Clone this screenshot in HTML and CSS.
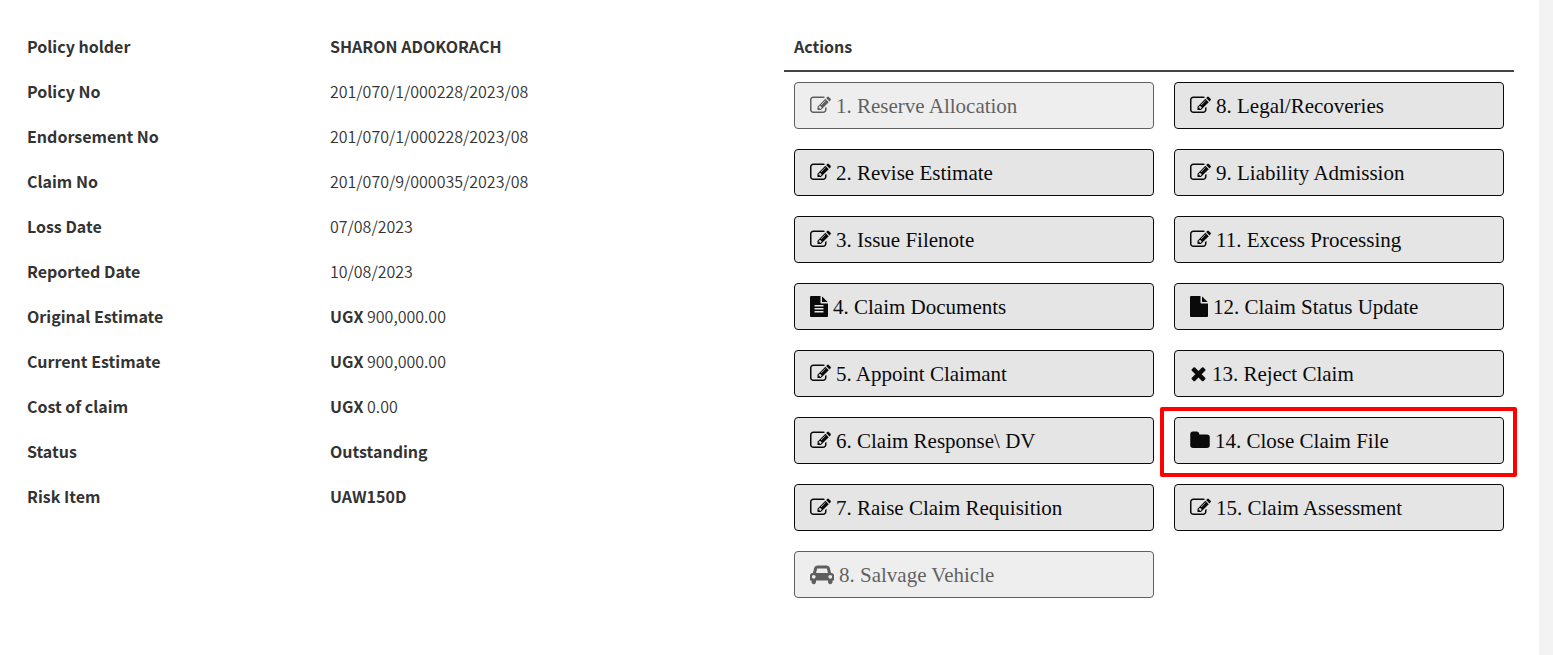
FILE: index.html
```html
<!DOCTYPE html>
<html lang="en">
<head>
    <meta charset="UTF-8">
    <meta name="viewport" content="width=device-width, initial-scale=1.0">
    <title>Claim Details</title>
    <link rel="stylesheet" href="styles.css">
</head>
<body>

    <!-- Icons -->
    <svg class="sprite" aria-hidden="true">
        <symbol id="edit" viewBox="0 0 1792 1792"><path d="M888 1184l116-116-152-152-116 116v56h96v96h56zm440-720q-16-16-33 1l-350 350q-17 17-1 33t33-1l350-350q17-17 1-33zm80 594v190q0 119-84.5 203.5t-203.5 84.5h-832q-119 0-203.5-84.5t-84.5-203.5v-832q0-119 84.5-203.5t203.5-84.5h832q63 0 117 25 15 7 18 23 3 17-9 29l-49 49q-14 14-32 8-23-6-45-6h-832q-66 0-113 47t-47 113v832q0 66 47 113t113 47h832q66 0 113-47t47-113v-126q0-13 9-22l64-64q15-15 35-7t20 29zm-96-738l288 288-672 672h-288v-288zm444 132l-92 92-288-288 92-92q28-28 68-28t68 28l152 152q28 28 28 68t-28 68z"/></symbol>
        <symbol id="file" viewBox="128 0 1536 1792"><path d="M1152 512v-472q22 14 36 28l408 408q14 14 28 36h-472zm-128 32q0 40 28 68t68 28h544v1056q0 40-28 68t-68 28h-1344q-40 0-68-28t-28-68v-1600q0-40 28-68t68-28h800v544z"/></symbol>
        <symbol id="file-text" viewBox="128 0 1536 1792"><path d="M1596 476q14 14 28 36h-472v-472q22 14 36 28zm-476 164h544v1056q0 40-28 68t-68 28h-1344q-40 0-68-28t-28-68v-1600q0-40 28-68t68-28h800v544q0 40 28 68t68 28zm160 736v-64q0-14-9-23t-23-9h-704q-14 0-23 9t-9 23v64q0 14 9 23t23 9h704q14 0 23-9t9-23zm0-256v-64q0-14-9-23t-23-9h-704q-14 0-23 9t-9 23v64q0 14 9 23t23 9h704q14 0 23-9t9-23zm0-256v-64q0-14-9-23t-23-9h-704q-14 0-23 9t-9 23v64q0 14 9 23t23 9h704q14 0 23-9t9-23z"/></symbol>
        <symbol id="times" viewBox="192 0 1408 1792"><path d="M1490 1322q0 40-28 68l-136 136q-28 28-68 28t-68-28l-294-294-294 294q-28 28-68 28t-68-28l-136-136q-28-28-28-68t28-68l294-294-294-294q-28-28-28-68t28-68l136-136q28-28 68-28t68 28l294 294 294-294q28-28 68-28t68 28l136 136q28 28 28 68t-28 68l-294 294 294 294q28 28 28 68z"/></symbol>
        <symbol id="folder" viewBox="64 0 1664 1792"><path d="M1728 608v704q0 92-66 158t-158 66h-1216q-92 0-158-66t-66-158v-960q0-92 66-158t158-66h320q92 0 158 66t66 158v32h672q92 0 158 66t66 158z"/></symbol>
        <symbol id="car" viewBox="0 0 2048 1792"><path d="M480 1088q0-66-47-113t-113-47-113 47-47 113 47 113 113 47 113-47 47-113zm36-320h1016l-89-357q-2-8-14-17.5t-21-9.5h-768q-9 0-21 9.5t-14 17.5zm1372 320q0-66-47-113t-113-47-113 47-47 113 47 113 113 47 113-47 47-113zm160-96v384q0 14-9 23t-23 9h-96v128q0 80-56 136t-136 56-136-56-56-136v-128h-1024v128q0 80-56 136t-136 56-136-56-56-136v-128h-96q-14 0-23-9t-9-23v-384q0-93 65.5-158.5t158.5-65.5h28l105-419q23-94 104-157.5t179-63.5h768q98 0 179 63.5t104 157.5l105 419h28q93 0 158.5 65.5t65.5 158.5z"/></symbol>
    </svg>

    <main class="page">
        <table class="details">
            <tr><th scope="row">Policy holder</th><td><b>SHARON ADOKORACH</b></td></tr>
            <tr><th scope="row">Policy No</th><td>201/070/1/000228/2023/08</td></tr>
            <tr><th scope="row">Endorsement No</th><td>201/070/1/000228/2023/08</td></tr>
            <tr><th scope="row">Claim No</th><td>201/070/9/000035/2023/08</td></tr>
            <tr><th scope="row">Loss Date</th><td>07/08/2023</td></tr>
            <tr><th scope="row">Reported Date</th><td>10/08/2023</td></tr>
            <tr><th scope="row">Original Estimate</th><td><b>UGX</b> 900,000.00</td></tr>
            <tr><th scope="row">Current Estimate</th><td><b>UGX</b> 900,000.00</td></tr>
            <tr><th scope="row">Cost of claim</th><td><b>UGX</b> 0.00</td></tr>
            <tr><th scope="row">Status</th><td><b>Outstanding</b></td></tr>
            <tr><th scope="row">Risk Item</th><td><b>UAW150D</b></td></tr>
        </table>

        <section class="actions">
            <h2 class="actions-title">Actions</h2>
            <div class="actions-grid">
                <div class="actions-col">
                    <button type="button" class="btn" disabled><svg class="icon"><use href="#edit"/></svg>1. Reserve Allocation</button>
                    <button type="button" class="btn"><svg class="icon"><use href="#edit"/></svg>2. Revise Estimate</button>
                    <button type="button" class="btn"><svg class="icon"><use href="#edit"/></svg>3. Issue Filenote</button>
                    <button type="button" class="btn"><svg class="icon icon-file"><use href="#file-text"/></svg>4. Claim Documents</button>
                    <button type="button" class="btn"><svg class="icon"><use href="#edit"/></svg>5. Appoint Claimant</button>
                    <button type="button" class="btn"><svg class="icon"><use href="#edit"/></svg>6. Claim Response\ DV</button>
                    <button type="button" class="btn"><svg class="icon"><use href="#edit"/></svg>7. Raise Claim Requisition</button>
                    <button type="button" class="btn" disabled><svg class="icon icon-car"><use href="#car"/></svg>8. Salvage Vehicle</button>
                </div>
                <div class="actions-col">
                    <button type="button" class="btn"><svg class="icon"><use href="#edit"/></svg>8. Legal/Recoveries</button>
                    <button type="button" class="btn"><svg class="icon"><use href="#edit"/></svg>9. Liability Admission</button>
                    <button type="button" class="btn"><svg class="icon"><use href="#edit"/></svg>11. Excess Processing</button>
                    <button type="button" class="btn"><svg class="icon icon-file"><use href="#file"/></svg>12. Claim Status Update</button>
                    <button type="button" class="btn"><svg class="icon icon-times"><use href="#times"/></svg>13. Reject Claim</button>
                    <button type="button" class="btn btn-marked"><svg class="icon icon-folder"><use href="#folder"/></svg>14. Close Claim File</button>
                    <button type="button" class="btn"><svg class="icon"><use href="#edit"/></svg>15. Claim Assessment</button>
                </div>
            </div>
        </section>
    </main>

</body>
</html>
```
FILE: styles.css
```css
* {
    box-sizing: border-box;
}

body {
    margin: 0;
    background-color: #f3f3f3;
    color: #333;
    font-family: "Source Sans Pro", "Noto Sans CJK SC", sans-serif;
    font-size: 16px;
    font-weight: 350;
    line-height: 24px;
}

.sprite {
    display: none;
}

.page {
    display: grid;
    grid-template-columns: 767fr 730fr;
    align-items: start;
    min-height: 100vh;
    margin-right: 14px;
    padding: 23px 25px 25px 17px;
    background-color: #fff;
}

.details {
    width: 100%;
    border-collapse: collapse;
    table-layout: fixed;
}

.details th,
.details td {
    height: 45px;
    padding: 0 10px;
    text-align: left;
}

.details th {
    width: 303px;
}

th,
b {
    font-weight: 700;
}

.actions-title {
    margin: 0;
    padding: 11px 10px 12px;
    border-bottom: 2px solid #444;
    font-size: 16px;
    font-weight: 700;
}

.actions-grid {
    display: grid;
    grid-template-columns: 360fr 330fr;
    gap: 20px;
    padding: 10px;
}

.actions-col {
    display: flex;
    flex-direction: column;
    gap: 20px;
}

.btn {
    display: flex;
    align-items: center;
    gap: 5px;
    height: 47px;
    padding: 2px 15px 0;
    border: 1px solid #0a0a0a;
    border-radius: 4px;
    background-color: #e5e5e5;
    color: #0a0a0a;
    font-family: "Times New Roman", "Liberation Serif", serif;
    font-size: 21px;
    text-align: left;
    cursor: pointer;
}

.btn:disabled {
    opacity: 0.65;
    cursor: not-allowed;
}

.icon {
    flex: none;
    width: 21px;
    height: 21px;
    margin-bottom: 2px;
    fill: currentColor;
}

.icon-file {
    width: 18px;
}

.icon-times {
    width: 17px;
}

.icon-folder {
    width: 20px;
}

.icon-car {
    width: 24px;
}

/* red frame around the highlighted action */
.btn-marked {
    position: relative;
}

.btn-marked::after {
    content: "";
    position: absolute;
    inset: -11px -14px -14px -15px;
    border: 4px solid #f00;
    border-radius: 2px;
    pointer-events: none;
}
```
